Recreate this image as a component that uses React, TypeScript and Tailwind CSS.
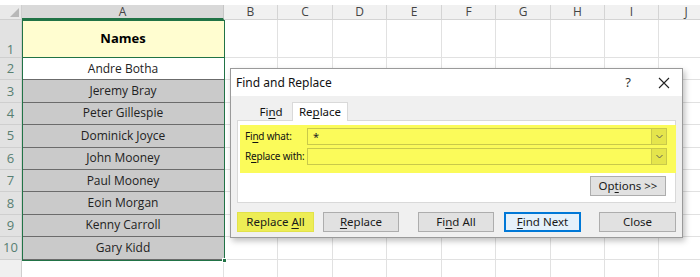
import React from "react";

const cols = ["B", "C", "D", "E", "F", "G", "H", "I", "J"];
const colW = [54, 55, 54, 55, 54, 55, 54, 54, 55];

const names = [
  "Andre Botha",
  "Jeremy Bray",
  "Peter Gillespie",
  "Dominick Joyce",
  "John Mooney",
  "Paul Mooney",
  "Eoin Morgan",
  "Kenny Carroll",
  "Gary Kidd",
];

const gridCols = "grid grid-cols-[22px_202px_54px_55px_54px_55px_54px_55px_54px_54px_55px]";

// underline the mnemonic letter like a windows dialog does
const Key: React.FC<{ children: React.ReactNode }> = ({ children }) => (
  <span className="underline underline-offset-2">{children}</span>
);

const Btn: React.FC<{ className?: string; children: React.ReactNode }> = ({ className, children }) => (
  <div
    className={`h-[20px] flex items-center justify-center text-[11.5px] text-[#1a1a1a] border ${className ?? "bg-[#e1e1e1] border-[#adadad]"}`}
  >
    <span className="whitespace-pre">{children}</span>
  </div>
);

const Sheet: React.FC = () => {
  return (
    <div className="pt-[5px] bg-white">
      {/* column headers */}
      <div className={`${gridCols} h-[15px] text-[12px] text-[#444]`}>
        <div className="bg-[#e9e9e9] border-r border-b border-[#cfcfcf] relative overflow-hidden">
          <div className="absolute right-[2px] bottom-[2px] w-0 h-0 border-l-[9px] border-l-transparent border-b-[9px] border-b-[#b8b8b8]" />
        </div>
        <div className="bg-[#d9d9d9] border-r border-[#c6c6c6] border-b-2 border-b-[#217346] flex items-center justify-center leading-none">
          A
        </div>
        {cols.map((c) => (
          <div
            key={c}
            className="bg-[#f1f1f1] border-r border-b border-[#d4d4d4] flex items-center justify-center leading-none"
          >
            {c}
          </div>
        ))}
      </div>

      {/* row 1 */}
      <div className={`${gridCols} h-[38px]`}>
        <div className="bg-[#e2e2e2] border-r border-b border-[#cfcfcf] flex items-end justify-center pb-[1px] text-[13px] leading-none text-[#587f72]">
          1
        </div>
        <div className="bg-[#fffdd0] border-b border-[#217346] flex items-center justify-center text-[13px] font-bold text-black">
          Names
        </div>
        {colW.map((w, i) => (
          <div key={i} className="border-r border-b border-[#e1e1e1]" />
        ))}
      </div>

      {/* rows 2-10 */}
      {names.map((n, i) => (
        <div key={n} className={`${gridCols} h-[22.4px]`}>
          <div className="bg-[#e2e2e2] border-r border-b border-[#cfcfcf] flex items-center justify-center text-[13px] leading-none text-[#587f72]">
            {i + 2}
          </div>
          <div
            className={`flex items-center justify-center text-[12px] text-[#222] border-b ${
              i === 0 ? "bg-white border-[#6b6b6b]" : "bg-[#cacaca] border-[#6b6b6b]"
            }`}
          >
            {n}
          </div>
          {colW.map((w, j) => (
            <div key={j} className="border-r border-b border-[#e1e1e1]" />
          ))}
        </div>
      ))}

      {/* row 11 */}
      <div className={`${gridCols} h-[20px]`}>
        <div className="bg-[#f0f0f0] border-r border-[#cfcfcf]" />
        <div className="border-r border-[#e1e1e1]" />
        {colW.map((w, j) => (
          <div key={j} className="border-r border-[#e1e1e1]" />
        ))}
      </div>
    </div>
  );
};

const Dialog: React.FC = () => {
  return (
    <div
      className="absolute left-[230px] top-[68px] w-[453px] h-[170px] bg-[#f0f0f0] border border-[#9a9a9a] shadow-[2px_3px_6px_rgba(0,0,0,0.25)] flex flex-col"
      style={{ fontFamily: '"Noto Sans", "Open Sans", sans-serif' }}
    >
      {/* title bar */}
      <div className="h-[27px] bg-white flex items-center pl-[5px] pr-[12px] text-[12px] text-[#111]">
        <span>Find and Replace</span>
        <span className="ml-auto mr-[27px] text-[13px] text-[#333]">?</span>
        <svg width="12" height="12" viewBox="0 0 12 12" className="text-[#222]">
          <path d="M1 1 L11 11 M11 1 L1 11" stroke="currentColor" strokeWidth="1.1" fill="none" />
        </svg>
      </div>

      {/* tabs */}
      <div className="flex items-end pl-[19px] pt-[6px] h-[24px] text-[11.5px] text-[#111]">
        <div className="w-[42px] h-[17px] flex items-center justify-center">
          <span>
            Fi<Key>n</Key>d
          </span>
        </div>
        <div className="w-[56px] h-[19px] bg-white border border-b-0 border-[#d9d9d9] flex items-center justify-center relative top-[1px]">
          <span>
            Re<Key>p</Key>lace
          </span>
        </div>
      </div>

      {/* tab panel */}
      <div className="mx-[6px] h-[83px] bg-white border border-[#d9d9d9] flex flex-col">
        <div className="ml-[2px] mt-[4px] w-[436px] h-[48px] bg-[#fbfb5a] flex flex-col gap-[3px] pt-[3px] pl-[5px] pr-[9px]">
          <div className="flex items-center h-[17px]">
            <span className="w-[62px] shrink-0 whitespace-nowrap text-[10px] tracking-[-0.2px] text-[#111]">
              Fi<Key>n</Key>d what:
            </span>
            <div className="flex-1 h-[17px] border border-[#c9c94a] flex">
              <span className="flex-1 text-[11px] leading-[15px] pl-[5px] text-[#222]">*</span>
              <div className="w-[15px] bg-[#e5e54c] border-l border-[#c9c94a] flex items-center justify-center">
                <svg width="7" height="5" viewBox="0 0 7 5">
                  <path d="M0.5 1 L3.5 4 L6.5 1" stroke="#555" strokeWidth="0.9" fill="none" />
                </svg>
              </div>
            </div>
          </div>
          <div className="flex items-center h-[17px]">
            <span className="w-[62px] shrink-0 whitespace-nowrap text-[10px] tracking-[-0.2px] text-[#111]">
              R<Key>e</Key>place with:
            </span>
            <div className="flex-1 h-[17px] border border-[#c9c94a] flex">
              <span className="flex-1" />
              <div className="w-[15px] bg-[#e5e54c] border-l border-[#c9c94a] flex items-center justify-center">
                <svg width="7" height="5" viewBox="0 0 7 5">
                  <path d="M0.5 1 L3.5 4 L6.5 1" stroke="#555" strokeWidth="0.9" fill="none" />
                </svg>
              </div>
            </div>
          </div>
        </div>
        <div className="flex justify-end pr-[9px] mt-[3px]">
          <div className="w-[76px]">
            <Btn>
              Op<Key>t</Key>ions &gt;&gt;
            </Btn>
          </div>
        </div>
      </div>

      {/* bottom buttons */}
      <div className="flex items-center mt-[9px] pl-[6px] text-[#111]">
        <div className="w-[77px]">
          <Btn className="bg-[#eded55] border-[#e2e24a]">
            Replace <Key>A</Key>ll
          </Btn>
        </div>
        <div className="w-[76px] ml-[9px]">
          <Btn>
            <Key>R</Key>eplace
          </Btn>
        </div>
        <div className="w-[76px] ml-[19px]">
          <Btn>
            Fi<Key>n</Key>d All
          </Btn>
        </div>
        <div className="w-[77px] ml-[10px]">
          <Btn className="bg-[#e5f1fb] border-[2px] border-[#0078d7]">
            <Key>F</Key>ind Next
          </Btn>
        </div>
        <div className="w-[77px] ml-[18px]">
          <Btn>Close</Btn>
        </div>
      </div>
    </div>
  );
};

const App: React.FC = () => {
  return (
    <div
      className="relative w-[700px] h-[277px] overflow-hidden bg-white"
      style={{ fontFamily: '"Open Sans", "Noto Sans", sans-serif' }}
    >
      <Sheet />
      {/* selection outline around A1:A10 */}
      <div className="absolute left-[22px] top-[20px] w-[203px] h-[241px] border-[1.5px] border-[#217346] pointer-events-none">
        <div className="absolute -right-[3px] -bottom-[3px] w-[5px] h-[5px] bg-[#217346] border border-white" />
      </div>
      <Dialog />
    </div>
  );
};

export default App;
